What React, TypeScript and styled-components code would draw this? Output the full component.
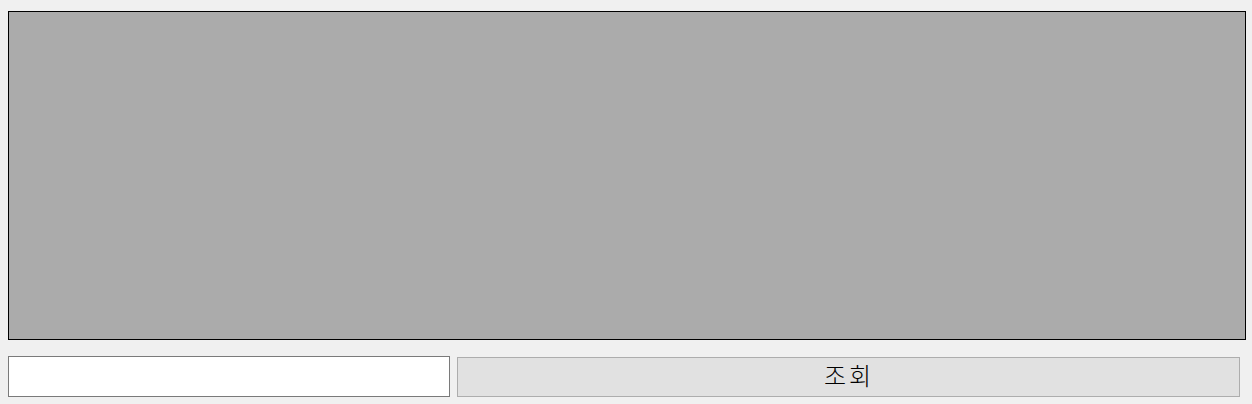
import React from 'react';
import styled, { createGlobalStyle } from 'styled-components';

const GlobalStyle = createGlobalStyle`
  html, body {
    margin: 0;
    padding: 0;
    background: #f0f0f0;
    font-family: "Noto Sans CJK KR", "Noto Sans", sans-serif;
  }
`;

const Page = styled.main`
  width: 1252px;
  height: 404px;
  box-sizing: border-box;
  padding: 11px 0 0 8px;
  display: flex;
  flex-direction: column;
`;

const Canvas = styled.section`
  width: 1238px;
  height: 329px;
  box-sizing: border-box;
  border: 1px solid #000000;
  background: #ababab;
`;

const Controls = styled.form`
  margin-top: 16px;
  display: flex;
  align-items: flex-start;
  gap: 7px;
`;

const QueryInput = styled.input`
  width: 442px;
  height: 41px;
  box-sizing: border-box;
  margin: 0;
  border: 1px solid #7a7a7a;
  background: #ffffff;
  outline: none;
  padding: 0 4px;
  font-size: 16px;
`;

const SearchButton = styled.button`
  width: 783px;
  height: 40px;
  margin: 1px 0 0;
  box-sizing: border-box;
  border: 1px solid #adadad;
  background: #e1e1e1;
  color: #000000;
  font-family: "Noto Sans CJK KR", sans-serif;
  font-size: 24px;
  font-weight: 300;
  letter-spacing: 3px;
  line-height: 1;
  padding: 0 0 5px 1px;
  cursor: pointer;
`;

function App() {
  return (
    <>
      <GlobalStyle />
      <Page>
        <Canvas />
        <Controls onSubmit={(e) => e.preventDefault()}>
          <QueryInput type="text" />
          <SearchButton type="submit">조회</SearchButton>
        </Controls>
      </Page>
    </>
  );
}

export default App;
